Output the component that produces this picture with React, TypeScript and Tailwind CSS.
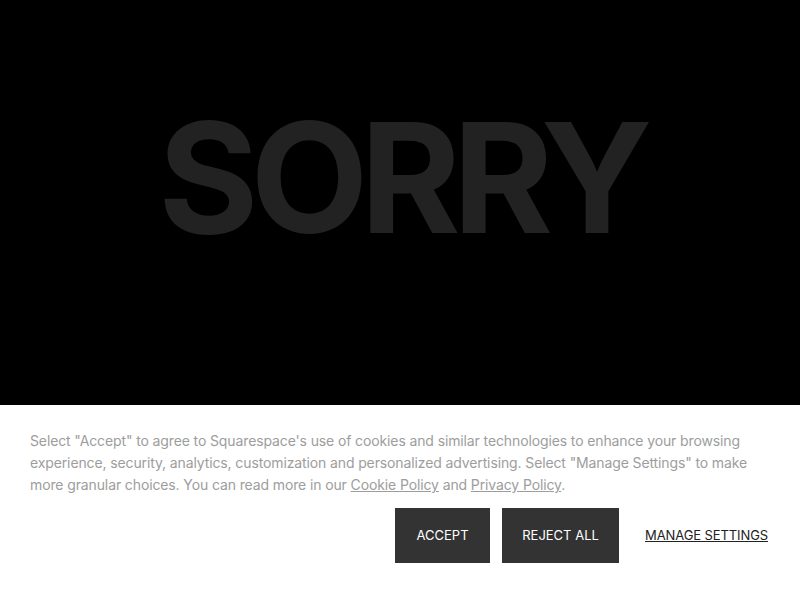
export default function App() {
  return (
    <div className="flex h-[600px] w-[800px] flex-col bg-black" style={{ fontFamily: "Inter, 'Liberation Sans', sans-serif" }}>
      <div className="flex flex-1 items-center justify-center">
        <h1 className="mt-[-50px] ml-[3px] text-[153px] font-bold leading-none tracking-[-8px] text-[#222222]">SORRY</h1>
      </div>
      <div className="bg-white px-[30px] pt-[25px] pb-[37px]">
        <p className="text-[14px] leading-[22px] tracking-[-0.12px] text-[#9d9d9d]">
          Select "Accept" to agree to Squarespace's use of cookies and similar technologies to enhance your browsing experience, security, analytics, customization and personalized advertising. Select "Manage Settings" to make more granular choices. You can read more in our{" "}
          <a className="underline">Cookie Policy</a> and <a className="underline">Privacy Policy</a>.
        </p>
        <div className="mt-[12px] flex items-center justify-end">
          <button className="h-[55px] w-[95px] bg-[#333333] text-[13px] text-white">ACCEPT</button>
          <button className="ml-[12px] h-[55px] w-[117px] bg-[#333333] text-[13px] text-white">REJECT ALL</button>
          <button className="ml-[26px] mr-[2px] text-[13px] tracking-[-0.1px] text-[#222222] underline">MANAGE SETTINGS</button>
        </div>
      </div>
    </div>
  );
}
